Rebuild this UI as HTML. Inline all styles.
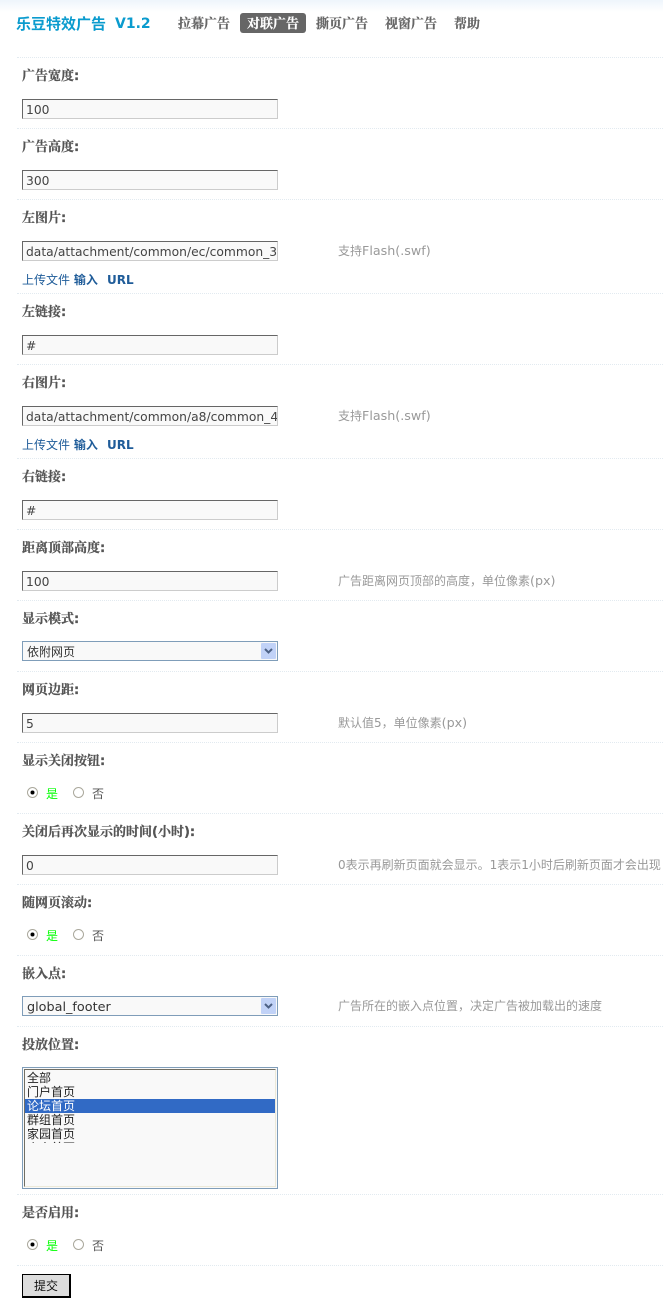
<!DOCTYPE html>
<html lang="zh">
<head>
<meta charset="utf-8">
<style>
html,body{margin:0;padding:0;background:#fff;}
body{position:relative;width:663px;height:1312px;overflow:hidden;font-family:"DejaVu Sans","WenQuanYi Zen Hei","Noto Sans CJK SC",sans-serif;font-size:12px;color:#555;}
.top{position:absolute;left:0;top:0;width:663px;height:12px;background:linear-gradient(#eef5fc,#fff);}
.a{position:absolute;white-space:nowrap;line-height:16px;}
.hr{position:absolute;left:17px;width:646px;height:0;border-top:1px dotted #e2eaf0;}
.l{position:absolute;left:22px;margin-top:2px;font-family:"DejaVu Sans","Noto Serif CJK SC",serif;font-weight:bold;color:#555;font-size:13px;line-height:16px;white-space:nowrap;-webkit-text-stroke:.25px #555;}
input.t{position:absolute;left:22px;width:256px;height:20px;box-sizing:border-box;margin:0;padding:2px 0 0 3px;border-style:solid;border-width:1px;border-color:#666 #ccc #ccc #666;background:#f9f9f9;font:12.3px "DejaVu Sans",sans-serif;color:#444;outline:none;}
.h{position:absolute;left:338px;color:#999;font-size:12px;line-height:16px;white-space:nowrap;}
.h span{font-size:12.7px;}
.nav{position:absolute;top:17px;font-family:"DejaVu Sans","Noto Serif CJK SC",serif;font-weight:bold;color:#666;font-size:13px;line-height:16px;white-space:nowrap;-webkit-text-stroke:.25px currentColor;}
.sel{position:absolute;left:22px;width:256px;height:20px;box-sizing:border-box;border:1px solid #7f9db9;background:#f9f9f9;color:#333;line-height:20px;padding-left:4px;font-size:12px;}
.arr{position:absolute;right:1px;top:1px;width:15px;height:16px;}
.r{position:absolute;left:27px;width:11px;height:11px;}
.y{position:absolute;left:46px;color:#0f0;line-height:16px;}
.n{position:absolute;left:92px;color:#555;line-height:16px;}
.link{position:absolute;left:22px;color:#1f5c99;line-height:16px;white-space:nowrap;}
.link b{color:#1f5c99;}
.link b+b{position:absolute;left:85px;top:0;}
.opt{height:14px;line-height:14px;padding-left:2px;color:#222;}
</style>
</head>
<body>
<div class="top"></div>
<div class="a" style="left:16px;top:15px;font-size:15px;font-weight:bold;color:#0a9bce;line-height:18px;">乐豆特效广告<span style="font-size:14px;position:absolute;left:99px;top:0;">V1.2</span></div>
<div class="nav" style="left:178px;">拉幕广告</div>
<div style="position:absolute;left:240px;top:13px;width:66px;height:20px;background:#666;border-radius:3px;"></div>
<div class="nav" style="left:247px;color:#fff;">对联广告</div>
<div class="nav" style="left:316px;">撕页广告</div>
<div class="nav" style="left:385px;">视窗广告</div>
<div class="nav" style="left:454px;">帮助</div>

<div class="hr" style="top:57px"></div>
<div class="l" style="top:67px">广告宽度:</div>
<input class="t" style="top:99px" value="100">
<div class="hr" style="top:128px"></div>
<div class="l" style="top:138px">广告高度:</div>
<input class="t" style="top:170px" value="300">
<div class="hr" style="top:199px"></div>
<div class="l" style="top:209px">左图片:</div>
<input class="t" style="top:241px" value="data/attachment/common/ec/common_35_icon.swf">
<div class="h" style="top:243px">支持<span>Flash(.swf)</span></div>
<div class="link" style="top:272px">上传文件 <b>输入</b><b>URL</b></div>
<div class="hr" style="top:293px"></div>
<div class="l" style="top:303px">左链接:</div>
<input class="t" style="top:335px" value="#">
<div class="hr" style="top:364px"></div>
<div class="l" style="top:374px">右图片:</div>
<input class="t" style="top:406px" value="data/attachment/common/a8/common_45_icon.swf">
<div class="h" style="top:408px">支持<span>Flash(.swf)</span></div>
<div class="link" style="top:437px">上传文件 <b>输入</b><b>URL</b></div>
<div class="hr" style="top:458px"></div>
<div class="l" style="top:468px">右链接:</div>
<input class="t" style="top:500px" value="#">
<div class="hr" style="top:529px"></div>
<div class="l" style="top:539px">距离顶部高度:</div>
<input class="t" style="top:571px" value="100">
<div class="h" style="top:573px">广告距离网页顶部的高度，单位像素<span>(px)</span></div>
<div class="hr" style="top:600px"></div>
<div class="l" style="top:610px">显示模式:</div>
<div class="sel" style="top:641px">依附网页<svg class="arr" viewBox="0 0 15 16"><rect width="15" height="16" rx="1" fill="#c1d2f7"/><path d="M4 6l3.5 3.5L11 6" fill="none" stroke="#4d6185" stroke-width="2"/></svg></div>
<div class="hr" style="top:671px"></div>
<div class="l" style="top:681px">网页边距:</div>
<input class="t" style="top:713px" value="5">
<div class="h" style="top:715px">默认值5，单位像素<span>(px)</span></div>
<div class="hr" style="top:742px"></div>
<div class="l" style="top:752px">显示关闭按钮:</div>
<svg class="r" style="top:787px" viewBox="0 0 11 11"><circle cx="5.5" cy="5.5" r="5" fill="#fff" stroke="#aaa89c"/><circle cx="5.5" cy="5.5" r="2" fill="#000"/></svg><div class="y" style="top:786px">是</div>
<svg class="r" style="top:787px;left:73px" viewBox="0 0 11 11"><circle cx="5.5" cy="5.5" r="5" fill="#fff" stroke="#aaa89c"/></svg><div class="n" style="top:786px">否</div>
<div class="hr" style="top:813px"></div>
<div class="l" style="top:823px">关闭后再次显示的时间(小时):</div>
<input class="t" style="top:855px" value="0">
<div class="h" style="top:857px;width:325px;overflow:hidden;">0表示再刷新页面就会显示。1表示1小时后刷新页面才会出现</div>
<div class="hr" style="top:884px"></div>
<div class="l" style="top:894px">随网页滚动:</div>
<svg class="r" style="top:929px" viewBox="0 0 11 11"><circle cx="5.5" cy="5.5" r="5" fill="#fff" stroke="#aaa89c"/><circle cx="5.5" cy="5.5" r="2" fill="#000"/></svg><div class="y" style="top:928px">是</div>
<svg class="r" style="top:929px;left:73px" viewBox="0 0 11 11"><circle cx="5.5" cy="5.5" r="5" fill="#fff" stroke="#aaa89c"/></svg><div class="n" style="top:928px">否</div>
<div class="hr" style="top:955px"></div>
<div class="l" style="top:965px">嵌入点:</div>
<div class="sel" style="top:996px;font-size:12.8px;line-height:21px;">global_footer<svg class="arr" viewBox="0 0 15 16"><rect width="15" height="16" rx="1" fill="#c1d2f7"/><path d="M4 6l3.5 3.5L11 6" fill="none" stroke="#4d6185" stroke-width="2"/></svg></div>
<div class="h" style="top:998px">广告所在的嵌入点位置，决定广告被加载出的速度</div>
<div class="hr" style="top:1026px"></div>
<div class="l" style="top:1036px">投放位置:</div>
<div style="position:absolute;left:22px;top:1067px;width:256px;height:122px;box-sizing:border-box;border:1px solid #7f9db9;background:#f9f9f9;padding:1px;">
<div style="height:100%;box-sizing:border-box;border:1px solid;border-color:#716f64 #ece9d8 #ece9d8 #716f64;overflow:hidden;padding-top:1px;">
<div class="opt">全部</div><div class="opt">门户首页</div><div class="opt" style="background:#316ac5;color:#fff">论坛首页</div><div class="opt">群组首页</div><div class="opt">家园首页</div><div class="opt" style="height:2px;overflow:hidden;">个人首页</div>
</div></div>
<div class="hr" style="top:1194px"></div>
<div class="l" style="top:1204px">是否启用:</div>
<svg class="r" style="top:1239px" viewBox="0 0 11 11"><circle cx="5.5" cy="5.5" r="5" fill="#fff" stroke="#aaa89c"/><circle cx="5.5" cy="5.5" r="2" fill="#000"/></svg><div class="y" style="top:1238px">是</div>
<svg class="r" style="top:1239px;left:73px" viewBox="0 0 11 11"><circle cx="5.5" cy="5.5" r="5" fill="#fff" stroke="#aaa89c"/></svg><div class="n" style="top:1238px">否</div>
<div class="hr" style="top:1265px"></div>
<button style="position:absolute;left:22px;top:1274px;width:49px;height:24px;box-sizing:border-box;margin:0;padding:0;border:1px solid #000;border-right-width:2px;border-bottom-width:2px;background:#ddd;color:#111;font:12px 'WenQuanYi Zen Hei','Noto Sans CJK SC',sans-serif;">提交</button>
</body>
</html>
